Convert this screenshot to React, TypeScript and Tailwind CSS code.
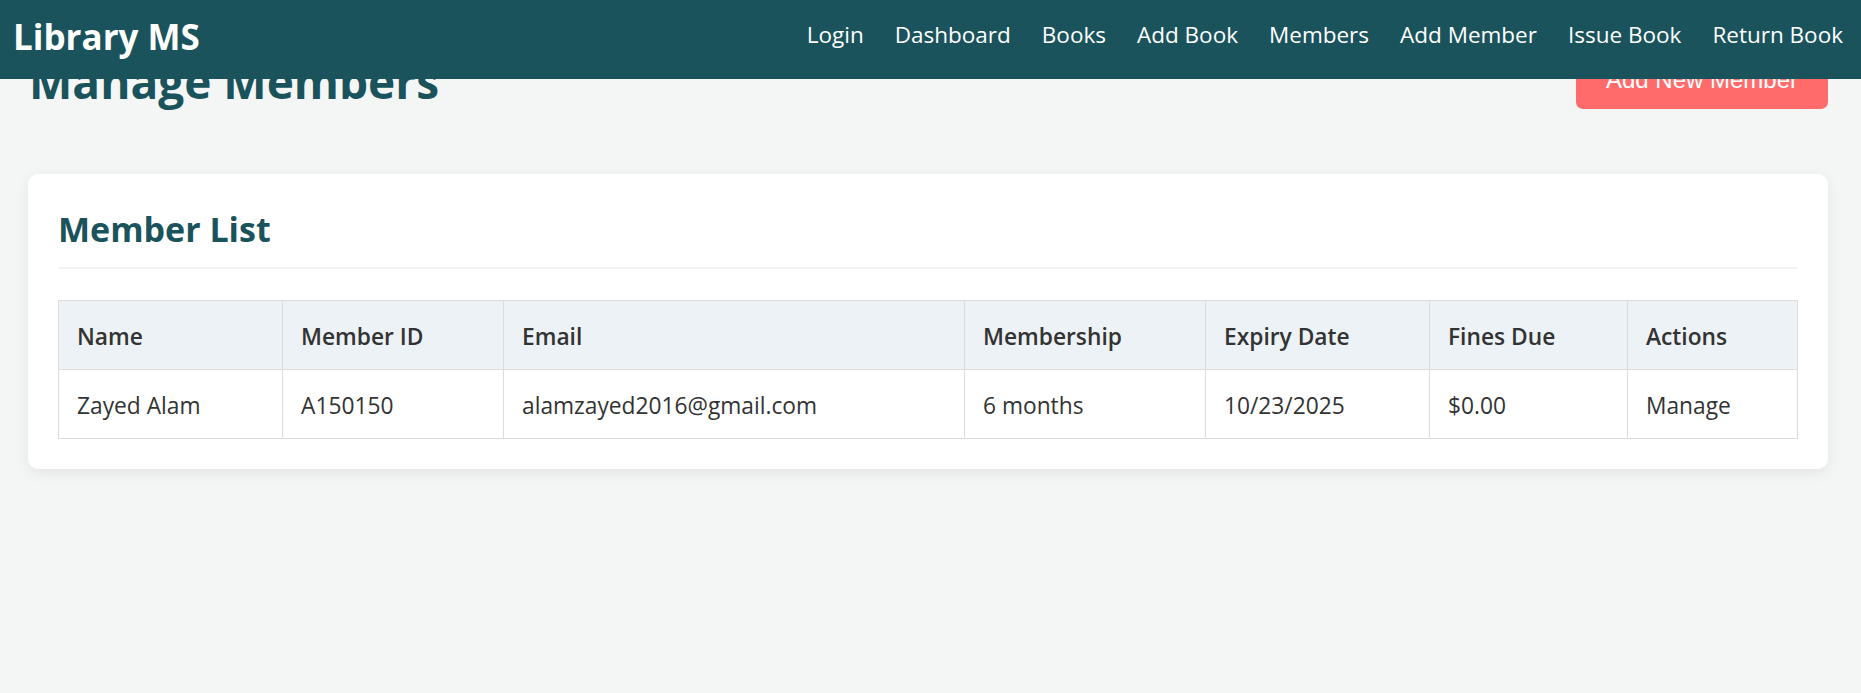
import React from "react";

const links = ["Login", "Dashboard", "Books", "Add Book", "Members", "Add Member", "Issue Book", "Return Book"];

const cols: { label: string; w: string; value: string }[] = [
  { label: "Name", w: "w-[224px]", value: "Zayed Alam" },
  { label: "Member ID", w: "w-[221px]", value: "A150150" },
  { label: "Email", w: "w-[461px]", value: "alamzayed2016@gmail.com" },
  { label: "Membership", w: "w-[241px]", value: "6 months" },
  { label: "Expiry Date", w: "w-[224px]", value: "10/23/2025" },
  { label: "Fines Due", w: "w-[198px]", value: "$0.00" },
  { label: "Actions", w: "w-[170px]", value: "Manage" },
];

export default function App() {
  return (
    <div
      className="relative h-[693px] overflow-hidden bg-[#f4f6f5] text-[#333333]"
      style={{ fontFamily: '"Open Sans", "Noto Sans", sans-serif' }}
    >
      <nav className="absolute left-0 right-0 top-0 z-10 flex h-[79px] items-center justify-between bg-[#1a535c] pl-[13px] pr-[18px]">
        <div className="-mt-[7px] text-[35px] font-bold leading-none text-white">Library MS</div>
        <ul className="-mt-[8px] flex items-center gap-[31px]">
          {links.map((l) => (
            <li key={l} className="text-[22.5px] leading-none text-white">
              {l}
            </li>
          ))}
        </ul>
      </nav>

      <main className="pl-[28px] pr-[33px] pt-[51px]">
        <div className="flex h-[58px] items-center justify-between">
          <h1 className="ml-[1px] mt-[2px] text-[46px] font-bold leading-[58px] text-[#1a535c]">Manage Members</h1>
          <button
            className="h-[58px] rounded-[7px] bg-[#ff6b6b] px-[30px] text-[24px] text-white"
            style={{ fontFamily: '"Liberation Sans", Arial, sans-serif' }}
          >
            Add New Member
          </button>
        </div>

        <section className="mt-[65px] w-[1800px] rounded-[10px] bg-white p-[30px] shadow-[0_4px_14px_rgba(0,0,0,0.07)]">
          <h2 className="border-b-2 border-[#f2f3f3] pb-[16px] pt-[4px] text-[34px] font-bold leading-[43px] text-[#1a535c]">
            Member List
          </h2>
          <table className="mt-[31px] w-full table-fixed border-collapse text-[22.75px]">
            <colgroup>
              {cols.map((c) => (
                <col key={c.label} className={c.w} />
              ))}
            </colgroup>
            <thead>
              <tr className="bg-[#edf2f6]">
                {cols.map((c) => (
                  <th
                    key={c.label}
                    className="h-[69px] border border-[#dcdcdc] px-[18px] pt-[5px] text-left font-semibold text-[#333333]"
                  >
                    {c.label}
                  </th>
                ))}
              </tr>
            </thead>
            <tbody>
              <tr>
                {cols.map((c) => (
                  <td key={c.label} className="h-[69px] border border-[#dcdcdc] px-[18px] pt-[5px] text-left text-[#333333]">
                    {c.value}
                  </td>
                ))}
              </tr>
            </tbody>
          </table>
        </section>
      </main>
    </div>
  );
}
